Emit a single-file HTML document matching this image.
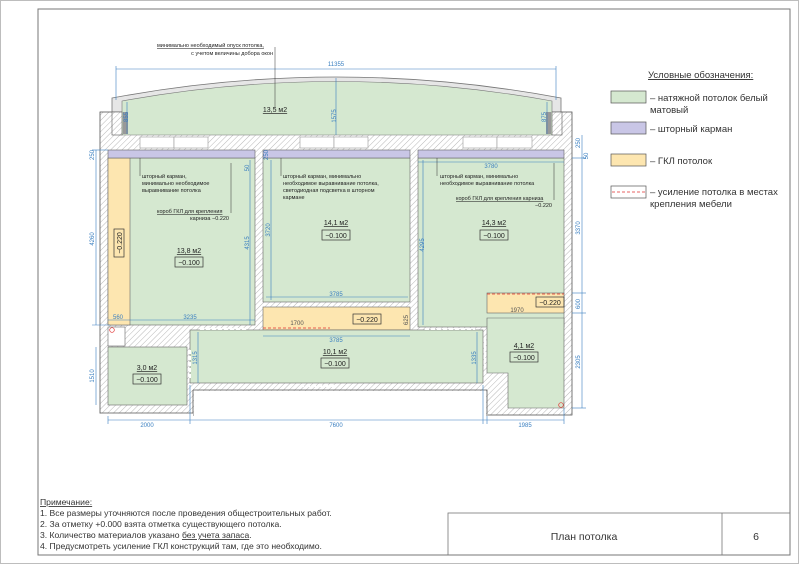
<!DOCTYPE html>
<html><head><meta charset="utf-8"><style>
html,body{margin:0;padding:0;background:#fff;}
svg{display:block;}
text{font-family:"Liberation Sans","DejaVu Sans",sans-serif;}
</style></head><body>
<svg width="800" height="565" viewBox="0 0 800 565" xmlns="http://www.w3.org/2000/svg">
<defs>
<pattern id="h" patternUnits="userSpaceOnUse" width="4" height="4" patternTransform="rotate(45)">
<rect width="4" height="4" fill="#fff"/><line x1="0" y1="0" x2="0" y2="4" stroke="#9a9a9a" stroke-width="0.7"/>
</pattern>
</defs>
<rect x="0.5" y="0.5" width="798" height="563" fill="#fff" stroke="#bdbdbd"/>
<rect x="38" y="9" width="752" height="546" fill="none" stroke="#777" stroke-width="1"/>

<rect x="100" y="112" width="472" height="303" fill="url(#h)" stroke="#555" stroke-width="0.8"/>
<rect x="194" y="391" width="292" height="30" fill="#fff"/>
<line x1="193" y1="390" x2="487" y2="390" stroke="#555" stroke-width="0.8"/>
<line x1="193" y1="390" x2="193" y2="414" stroke="#555" stroke-width="0.8"/>
<line x1="487" y1="390" x2="487" y2="414" stroke="#555" stroke-width="0.8"/>
<rect x="99" y="413.5" width="94" height="8" fill="#fff"/>
<line x1="100" y1="413" x2="193" y2="413" stroke="#555" stroke-width="0.8"/>
<rect x="487" y="415.5" width="90" height="8" fill="#fff"/>

<path d="M112 112 L112 98 Q336 56 561 98 L561 112 Z" fill="#e6e6e6" stroke="#777" stroke-width="0.8"/>
<path d="M122 135 L122 101 Q336 62 552 101 L552 135 Z" fill="#d5e8d0" stroke="#777" stroke-width="0.6"/>
<rect x="112" y="112" width="10" height="23" fill="url(#h)" stroke="#555" stroke-width="0.6"/>
<rect x="552" y="112" width="10" height="23" fill="url(#h)" stroke="#555" stroke-width="0.6"/>
<rect x="123" y="112" width="5" height="22" fill="#999"/>
<rect x="546" y="112" width="5" height="22" fill="#999"/>

<g fill="#fff" stroke="#999" stroke-width="0.6">
<rect x="140" y="137" width="34" height="11"/><rect x="174" y="137" width="34" height="11"/>
<rect x="300" y="137" width="34" height="11"/><rect x="334" y="137" width="34" height="11"/>
<rect x="463" y="137" width="34" height="11"/><rect x="497" y="137" width="35" height="11"/>
</g>

<g stroke="#666" stroke-width="0.6">
<rect x="108" y="158" width="147" height="167" fill="#d5e8d0"/>
<rect x="108" y="158" width="22" height="167" fill="#fde6b0"/>
<rect x="263" y="158" width="147" height="144" fill="#d5e8d0"/>
<rect x="263" y="307" width="147" height="23" fill="#fde6b0"/>
<rect x="418" y="158" width="146" height="169" fill="#d5e8d0"/>
<rect x="108" y="150" width="147" height="8" fill="#c9c6e6"/>
<rect x="263" y="150" width="147" height="8" fill="#c9c6e6"/>
<rect x="418" y="150" width="146" height="8" fill="#c9c6e6"/>
<rect x="190" y="330" width="293" height="53" fill="#d5e8d0"/>
<rect x="108" y="347" width="79" height="58" fill="#d5e8d0"/>
<rect x="108" y="327" width="17" height="19" fill="#fff"/>
<rect x="487" y="293" width="77" height="20" fill="#fde6b0"/>
<path d="M487 318 H564 V408 H508 V373 H487 Z" fill="#d5e8d0"/>
</g>
<g stroke="#fff" stroke-width="2" stroke-dasharray="4 2">
<line x1="200" y1="329" x2="248" y2="329"/>
<line x1="425" y1="329" x2="475" y2="329"/>
<line x1="300" y1="386" x2="337" y2="386"/>
<line x1="485" y1="340" x2="485" y2="368"/>
<line x1="190" y1="350" x2="190" y2="378"/>
</g>
<g stroke="#e03030" stroke-width="0.7" stroke-dasharray="3 2" fill="none">
<line x1="263" y1="328" x2="330" y2="328"/>
<line x1="487" y1="294" x2="564" y2="294"/>
</g>
<circle cx="112" cy="330" r="2.3" fill="none" stroke="#e03030" stroke-width="0.7"/>
<circle cx="561" cy="405" r="2.3" fill="none" stroke="#e03030" stroke-width="0.7"/>

<g stroke="#3a7fc0" stroke-width="0.6" fill="none">
<line x1="116" y1="69" x2="556" y2="69"/><line x1="116" y1="66" x2="116" y2="100"/><line x1="556" y1="66" x2="556" y2="100"/>
<line x1="336" y1="78" x2="336" y2="135"/>
<line x1="127" y1="102" x2="127" y2="134"/><line x1="547" y1="102" x2="547" y2="134"/>
<line x1="96" y1="150" x2="96" y2="325"/><line x1="96" y1="347" x2="96" y2="405"/>
<line x1="92" y1="150" x2="108" y2="150"/><line x1="92" y1="325" x2="110" y2="325"/>
<line x1="582" y1="135" x2="582" y2="408"/>
<line x1="572" y1="158" x2="586" y2="158"/><line x1="572" y1="293" x2="586" y2="293"/><line x1="572" y1="313" x2="586" y2="313"/><line x1="572" y1="408" x2="586" y2="408"/>
<line x1="108" y1="420" x2="564" y2="420"/>
<line x1="108" y1="416" x2="108" y2="424"/><line x1="190" y1="385" x2="190" y2="424"/><line x1="483" y1="385" x2="483" y2="424"/><line x1="487" y1="416" x2="487" y2="424"/><line x1="564" y1="408" x2="564" y2="424"/>
<line x1="108" y1="320" x2="255" y2="320"/>
<line x1="250" y1="160" x2="250" y2="325"/>
<line x1="271" y1="160" x2="271" y2="300"/>
<line x1="266" y1="297" x2="408" y2="297"/>
<line x1="263" y1="336" x2="410" y2="336"/>
<line x1="423" y1="160" x2="423" y2="325"/>
<line x1="418" y1="162" x2="564" y2="162"/>
<line x1="198" y1="332" x2="198" y2="383"/>
<line x1="477" y1="332" x2="477" y2="383"/>
</g>
<g fill="#3a7fc0" font-size="6" text-anchor="middle">
<text x="336" y="66">11355</text>
<text x="147" y="427">2000</text>
<text x="336" y="427">7600</text>
<text x="525" y="427">1985</text>
<text x="118" y="319">560</text>
<text x="190" y="319">3235</text>
<text x="336" y="296">3785</text>
<text x="336" y="342">3785</text>
<text x="297" y="325" fill="#555">1700</text>
<text x="517" y="312" fill="#555">1970</text>
<text x="491" y="168">3780</text>
<text transform="translate(94,239) rotate(-90)">4260</text>
<text transform="translate(94,376) rotate(-90)">1510</text>
<text transform="translate(94,155) rotate(-90)">250</text>
<text transform="translate(249,243) rotate(-90)">4315</text>
<text transform="translate(270,230) rotate(-90)">3720</text>
<text transform="translate(424,245) rotate(-90)">4295</text>
<text transform="translate(580,228) rotate(-90)">3370</text>
<text transform="translate(580,304) rotate(-90)">600</text>
<text transform="translate(580,362) rotate(-90)">2305</text>
<text transform="translate(580,143) rotate(-90)">250</text>
<text transform="translate(588,156) rotate(-90)">50</text>
<text transform="translate(336,116) rotate(-90)">1575</text>
<text transform="translate(128,117) rotate(-90)">855</text>
<text transform="translate(546,117) rotate(-90)">875</text>
<text transform="translate(197,358) rotate(-90)">1315</text>
<text transform="translate(476,358) rotate(-90)">1335</text>
<text transform="translate(268,155) rotate(-90)">250</text>
<text transform="translate(249,168) rotate(-90)">50</text>
<text transform="translate(408,320) rotate(-90)" fill="#555">625</text>
</g>

<g font-size="7" fill="#222" text-anchor="middle">
<text x="275" y="112" text-decoration="underline">13,5 м2</text>
<text x="336" y="225" text-decoration="underline">14,1 м2</text>
<text x="494" y="225" text-decoration="underline">14,3 м2</text>
<text x="189" y="253" text-decoration="underline">13,8 м2</text>
<text x="335" y="354" text-decoration="underline">10,1 м2</text>
<text x="147" y="370" text-decoration="underline">3,0 м2</text>
<text x="524" y="348" text-decoration="underline">4,1 м2</text>
</g>
<g font-size="7" fill="#222" text-anchor="middle" stroke-width="0.7">
<rect x="322" y="230" width="28" height="10" fill="none" stroke="#333"/><text x="336" y="238">−0.100</text>
<rect x="480" y="230" width="28" height="10" fill="none" stroke="#333"/><text x="494" y="238">−0.100</text>
<rect x="175" y="257" width="28" height="10" fill="none" stroke="#333"/><text x="189" y="265">−0.100</text>
<rect x="321" y="358" width="28" height="10" fill="none" stroke="#333"/><text x="335" y="366">−0.100</text>
<rect x="133" y="374" width="28" height="10" fill="none" stroke="#333"/><text x="147" y="382">−0.100</text>
<rect x="510" y="352" width="28" height="10" fill="none" stroke="#333"/><text x="524" y="360">−0.100</text>
<rect x="353" y="314" width="28" height="10" fill="none" stroke="#333"/><text x="367" y="322">−0.220</text>
<rect x="536" y="297" width="28" height="10" fill="none" stroke="#333"/><text x="550" y="305">−0.220</text>
<rect x="114" y="229" width="10" height="28" fill="none" stroke="#333"/><text transform="translate(122,243) rotate(-90)">−0.220</text>
</g>

<g font-size="5.5" fill="#222">
<text x="157" y="47" text-decoration="underline">минимально необходимый опуск потолка,</text>
<text x="273" y="55" text-anchor="end">с учетом величины добора окон</text>
<text x="142" y="178">шторный карман,</text>
<text x="142" y="185">минимально необходимое</text>
<text x="142" y="192">выравнивание потолка</text>
<text x="157" y="213" text-decoration="underline">короб ГКЛ для крепления</text>
<text x="229" y="220" text-anchor="end">карниза −0.220</text>
<text x="283" y="178">шторный карман, минимально</text>
<text x="283" y="185">необходимое выравнивание потолка,</text>
<text x="283" y="192">светодиодная подсветка в шторном</text>
<text x="283" y="199">кармане</text>
<text x="440" y="178">шторный карман, минимально</text>
<text x="440" y="185">необходимое выравнивание потолка</text>
<text x="456" y="200" text-decoration="underline">короб ГКЛ для крепления карниза</text>
<text x="552" y="207" text-anchor="end">−0.220</text>
</g>
<g stroke="#333" stroke-width="0.5" fill="none">
<line x1="275" y1="47" x2="275" y2="108"/>
<line x1="140" y1="158" x2="140" y2="176"/>
<line x1="281" y1="158" x2="281" y2="176"/>
<line x1="437" y1="158" x2="437" y2="176"/>
<line x1="231" y1="213" x2="231" y2="163"/>
<line x1="554" y1="200" x2="554" y2="163"/>
</g>

<g font-size="9.5" fill="#333">
<text x="648" y="78" text-decoration="underline">Условные обозначения:</text>
<rect x="611" y="91" width="35" height="12" fill="#d5e8d0" stroke="#555" stroke-width="0.7"/>
<text x="650" y="101">– натяжной потолок белый</text>
<text x="650" y="113">матовый</text>
<rect x="611" y="122" width="35" height="12" fill="#c9c6e6" stroke="#555" stroke-width="0.7"/>
<text x="650" y="132">– шторный карман</text>
<rect x="611" y="154" width="35" height="12" fill="#fde6b0" stroke="#555" stroke-width="0.7"/>
<text x="650" y="164">– ГКЛ потолок</text>
<rect x="611" y="186" width="35" height="12" fill="#fff" stroke="#555" stroke-width="0.7"/>
<line x1="612" y1="192" x2="645" y2="192" stroke="#e03030" stroke-width="0.7" stroke-dasharray="3 2"/>
<text x="650" y="195">– усиление потолка в местах</text>
<text x="650" y="207">крепления мебели</text>
</g>

<g font-size="8.6" fill="#333">
<text x="40" y="505" text-decoration="underline">Примечание:</text>
<text x="40" y="516">1. Все размеры уточняются после проведения общестроительных работ.</text>
<text x="40" y="527">2. За отметку +0.000 взята отметка существующего потолка.</text>
<text x="40" y="538">3. Количество материалов указано <tspan text-decoration="underline">без учета запаса</tspan>.</text>
<text x="40" y="549">4. Предусмотреть усиление ГКЛ конструкций там, где это необходимо.</text>
</g>
<rect x="448" y="513" width="342" height="42" fill="none" stroke="#777" stroke-width="0.8"/>
<line x1="722" y1="513" x2="722" y2="555" stroke="#777" stroke-width="0.8"/>
<text x="584" y="540" font-size="10.5" fill="#333" text-anchor="middle">План потолка</text>
<text x="756" y="540" font-size="10.5" fill="#333" text-anchor="middle">6</text>
</svg>
</body></html>
